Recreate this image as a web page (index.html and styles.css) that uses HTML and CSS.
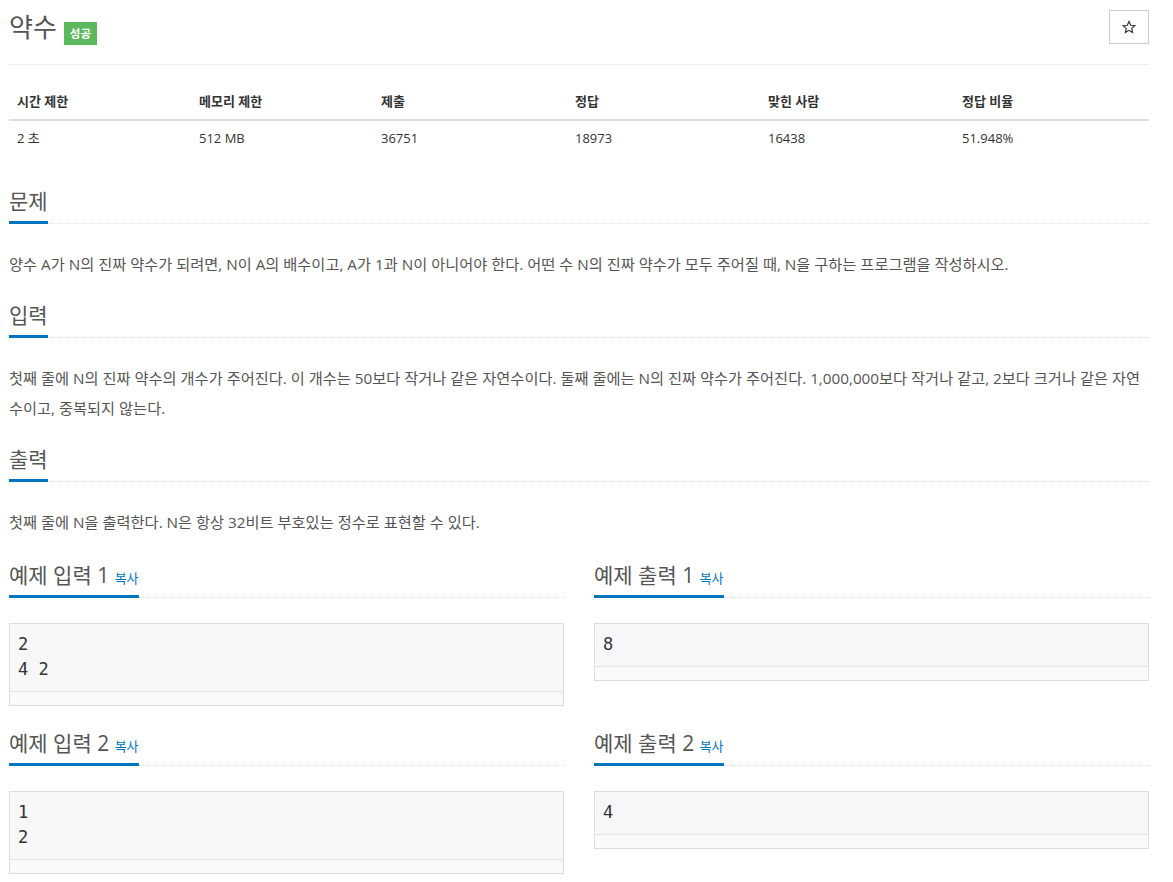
FILE: index.html
```html
<!DOCTYPE html>
<html lang="ko">
<head>
<meta charset="utf-8">
<title>약수</title>
<link rel="stylesheet" href="styles.css">
</head>
<body>
<div class="container">
  <div class="page-header">
    <h1 class="title">약수 <span class="badge">성공</span></h1>
    <button class="star-btn" type="button" aria-label="즐겨찾기"><svg width="14" height="14" viewBox="0 0 24 24"><path d="M12 2.5l2.9 6.6 7.1.6-5.4 4.7 1.6 7-6.2-3.7-6.2 3.7 1.6-7L2 9.7l7.1-.6z" fill="none" stroke="#333" stroke-width="2" stroke-linejoin="miter"/></svg></button>
  </div>

  <table class="info">
    <thead>
      <tr><th>시간 제한</th><th>메모리 제한</th><th>제출</th><th>정답</th><th>맞힌 사람</th><th>정답 비율</th></tr>
    </thead>
    <tbody>
      <tr><td>2 초</td><td>512 MB</td><td>36751</td><td>18973</td><td>16438</td><td>51.948%</td></tr>
    </tbody>
  </table>

  <section class="section first">
    <div class="headline"><h2>문제</h2></div>
    <p class="problem-text">양수 A가 N의 진짜 약수가 되려면, N이 A의 배수이고, A가 1과 N이 아니어야 한다. 어떤 수 N의 진짜 약수가 모두 주어질 때, N을 구하는 프로그램을 작성하시오.</p>
  </section>

  <section class="section">
    <div class="headline"><h2>입력</h2></div>
    <p class="problem-text">첫째 줄에 N의 진짜 약수의 개수가 주어진다. 이 개수는 50보다 작거나 같은 자연수이다. 둘째 줄에는 N의 진짜 약수가 주어진다. 1,000,000보다 작거나 같고, 2보다 크거나 같은 자연수이고, 중복되지 않는다.</p>
  </section>

  <section class="section">
    <div class="headline"><h2>출력</h2></div>
    <p class="problem-text">첫째 줄에 N을 출력한다. N은 항상 32비트 부호있는 정수로 표현할 수 있다.</p>
  </section>

  <div class="samples">
    <section class="sample-section top">
      <div class="headline"><h2>예제 입력 1 <a class="copy" href="#">복사</a></h2></div>
      <div class="sample"><pre>2
4 2</pre><div class="scroll"></div></div>
    </section>
    <section class="sample-section top">
      <div class="headline"><h2>예제 출력 1 <a class="copy" href="#">복사</a></h2></div>
      <div class="sample"><pre>8</pre><div class="scroll"></div></div>
    </section>
    <section class="sample-section">
      <div class="headline"><h2>예제 입력 2 <a class="copy" href="#">복사</a></h2></div>
      <div class="sample"><pre>1
2</pre><div class="scroll"></div></div>
    </section>
    <section class="sample-section">
      <div class="headline"><h2>예제 출력 2 <a class="copy" href="#">복사</a></h2></div>
      <div class="sample"><pre>4</pre><div class="scroll"></div></div>
    </section>
  </div>
</div>
</body>
</html>
```

FILE: styles.css
```css
* { box-sizing: border-box; }

html, body {
  margin: 0;
  padding: 0;
  background: #fff;
}

body {
  font-family: "Open Sans", "Noto Sans CJK KR", sans-serif;
  color: #333;
  font-size: 14px;
}

.container {
  width: 1140px;
  margin-left: 9px;
}

.page-header {
  display: flex;
  justify-content: space-between;
  align-items: flex-start;
  border-bottom: 1px solid #eee;
  height: 65px;
  padding-top: 10px;
}

.title {
  margin: 0;
  font-size: 26px;
  font-weight: 400;
  color: #555;
  line-height: 34px;
  display: flex;
  align-items: flex-start;
  gap: 7px;
}

.badge {
  display: inline-block;
  background: #5cb85c;
  color: #fff;
  font-size: 11.5px;
  font-weight: 700;
  line-height: 23px;
  height: 23px;
  padding: 0 6px;
  margin-top: 12px;
}

.star-btn {
  width: 40px;
  height: 34px;
  border: 1px solid #ccc;
  background: #fff;
  padding: 0;
  margin: 0;
  display: flex;
  align-items: center;
  justify-content: center;
}

.star-btn svg {
  display: block;
}

.info {
  width: 100%;
  border-collapse: collapse;
  table-layout: fixed;
  margin-top: 19px;
  font-size: 13px;
}

.info th, .info td {
  text-align: left;
  padding: 8px;
  line-height: 18.5px;
}

.info th {
  font-weight: 700;
  border-bottom: 2px solid #ddd;
}

.info th:nth-child(1), .info th:nth-child(2) { width: 182px; }
.info th:nth-child(3) { width: 194px; }
.info th:nth-child(4) { width: 193px; }
.info th:nth-child(5) { width: 194px; }

.section {
  margin-top: 23px;
}

.section.first {
  margin-top: 33px;
}

.headline {
  display: flex;
  align-items: flex-end;
  border-bottom: 1px dotted #ddd;
  margin-bottom: 25px;
}

.headline h2 {
  margin: 0 0 -1px;
  font-size: 21px;
  font-weight: 400;
  line-height: 26px;
  height: 36px;
  color: #555;
  padding-bottom: 7px;
  border-bottom: 3px solid #0076c0;
  white-space: nowrap;
}

.copy {
  font-size: 13px;
  line-height: 1;
  color: #0076c0;
  text-decoration: none;
}

.problem-text {
  margin: 0;
  font-size: 15.25px;
  line-height: 30px;
  color: #555;
}

.samples {
  display: grid;
  grid-template-columns: 555px 555px;
  column-gap: 30px;
}

.sample-section {
  margin-top: 24px;
}

.sample-section.top {
  margin-top: 25px;
}

.sample {
  border: 1px solid #ddd;
  background: #f7f7f9;
}

.sample pre {
  margin: 0;
  padding: 8px 8px 9px;
  font-family: "DejaVu Sans Mono", monospace;
  font-size: 17px;
  line-height: 25px;
  color: #333;
}

.scroll {
  height: 14px;
  border-top: 1px solid #e3e3e3;
  background: #fafafa;
}
```
